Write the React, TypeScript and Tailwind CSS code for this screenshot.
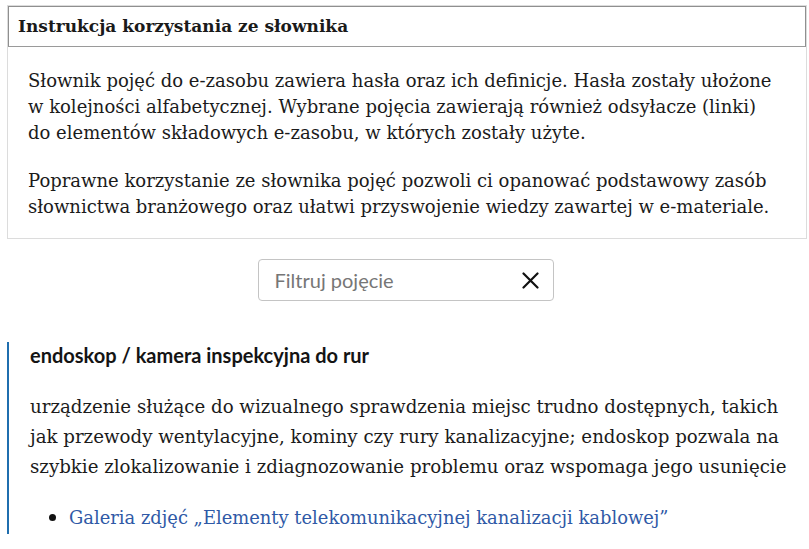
import { useState } from "react";

const serif = "font-['DejaVu_Serif',serif]";
const sans = "font-['Lato',sans-serif]";

export default function App() {
  const [query, setQuery] = useState("");

  return (
    <div className="w-[809px] h-[549px] overflow-hidden bg-white text-[#1b1b1b]">
      {/* instrukcja */}
      <div className="ml-[7px] mr-[2px] mt-[5px] border border-[#dcdcdc]">
        <div className="h-[41px] border border-[#8f8f8f] border-b-[#9a9a9a] flex items-center px-[9px]">
          <h2 className={`${serif} text-[17px] font-bold text-[#1a1a1a]`}>
            Instrukcja korzystania ze słownika
          </h2>
        </div>
        <div className={`${serif} text-[18px] leading-[26px] pl-[20px] pr-[24px] pt-[21px] pb-[18px]`}>
          <p>
            Słownik pojęć do e-zasobu zawiera hasła oraz ich definicje. Hasła zostały ułożone w
            kolejności alfabetycznej. Wybrane pojęcia zawierają również odsyłacze (linki) do
            elementów składowych e-zasobu, w których zostały użyte.
          </p>
          <p className="mt-[22px]">
            Poprawne korzystanie ze słownika pojęć pozwoli ci opanować podstawowy zasób słownictwa
            branżowego oraz ułatwi przyswojenie wiedzy zawartej w e-materiale.
          </p>
        </div>
      </div>

      {/* filtr */}
      <div className="flex justify-center mt-[20px] pl-[2px]">
        <div className="w-[296px] h-[42px] border border-[#c4c4c4] rounded-[4px] flex items-center pl-[16px] pr-[11px]">
          <input
            className={`${sans} flex-1 min-w-0 text-[20px] outline-none placeholder:text-[#767676]`}
            placeholder="Filtruj pojęcie"
            value={query}
            onChange={(e) => setQuery(e.target.value)}
          />
          <button onClick={() => setQuery("")} className="w-[22px] h-[22px] flex items-center justify-center">
            <svg width="17" height="17" viewBox="0 0 17 17" fill="none" stroke="#111" strokeWidth="2.2" strokeLinecap="round">
              <path d="M1.5 1.5 L15.5 15.5 M15.5 1.5 L1.5 15.5" />
            </svg>
          </button>
        </div>
      </div>

      {/* haslo */}
      <div className="mt-[41px] ml-[7px] border-l-2 border-[#1f6eae] pl-[21px] pb-[1px]">
        <h3 className={`${sans} text-[20px] font-bold leading-[26px] text-[#141414]`}>
          endoskop / kamera inspekcyjna do rur
        </h3>
        <p className={`${serif} text-[18.2px] leading-[30px] mt-[24px]`}>
          urządzenie służące do wizualnego sprawdzenia miejsc trudno dostępnych, takich jak przewody
          wentylacyjne, kominy czy rury kanalizacyjne; endoskop pozwala na szybkie zlokalizowanie i
          zdiagnozowanie problemu oraz wspomaga jego usunięcie
        </p>
        <ul className="list-disc pl-[39px] mt-[20px] marker:text-[#111] marker:text-[22px]">
          <li className={`${serif} text-[17.9px] leading-[30px]`}>
            <a href="#" className="text-[#2f59a6]">
              Galeria zdjęć „Elementy telekomunikacyjnej kanalizacji kablowej”
            </a>
          </li>
        </ul>
      </div>
    </div>
  );
}
